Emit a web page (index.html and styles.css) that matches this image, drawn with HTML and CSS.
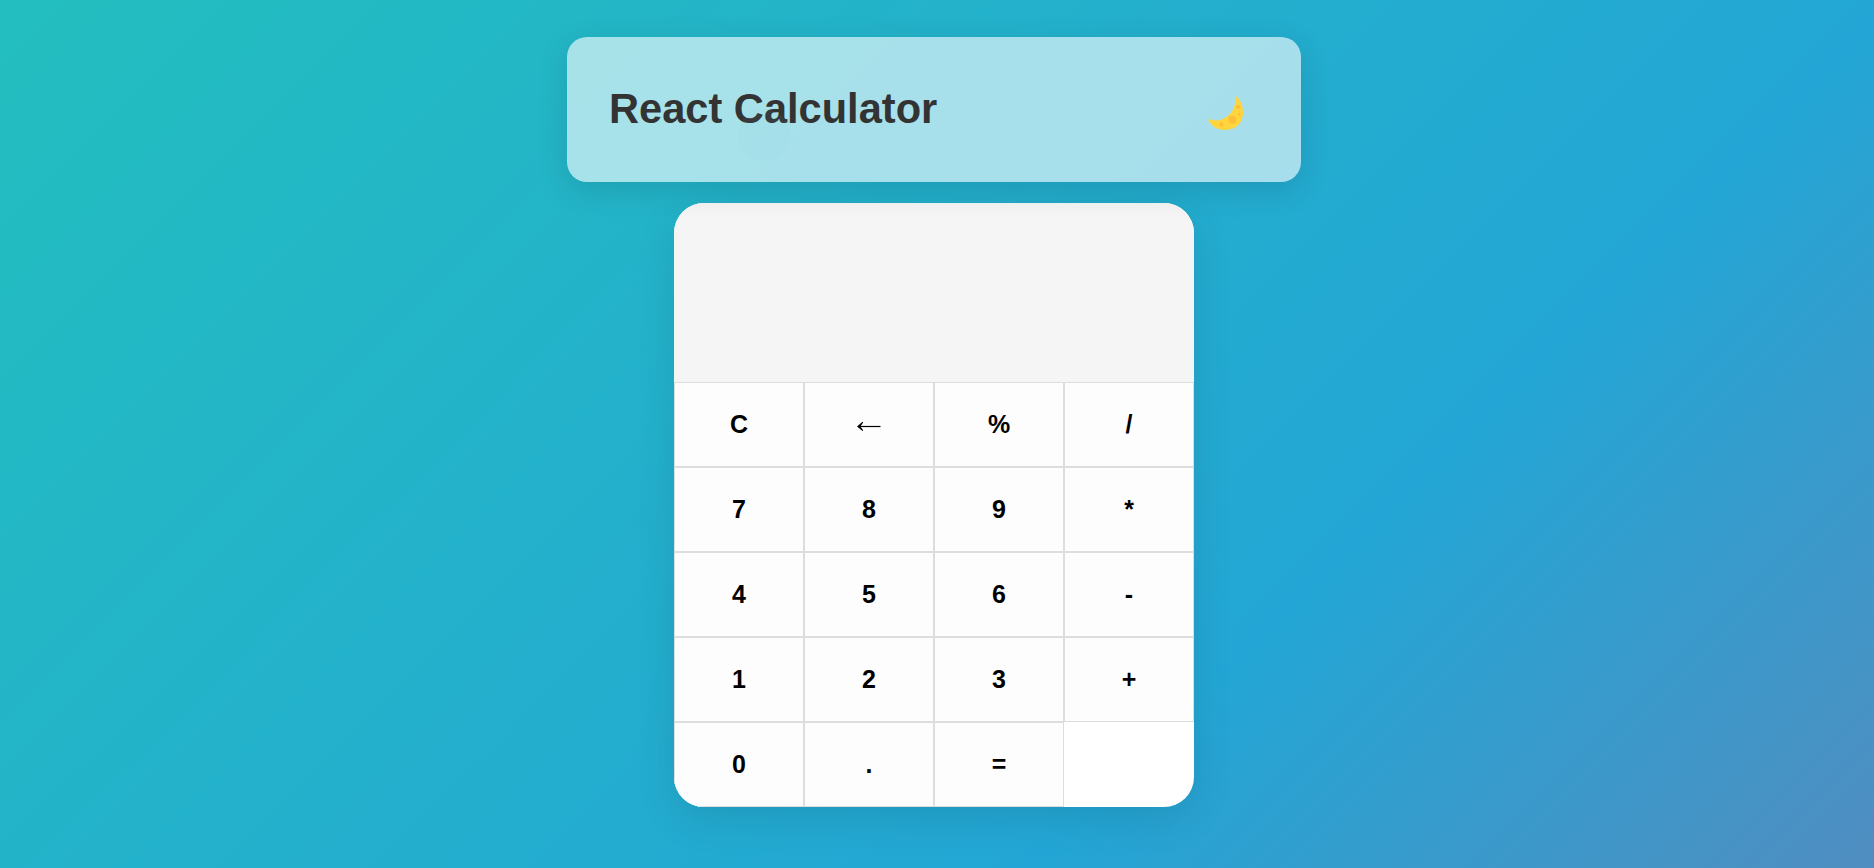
FILE: index.html
```
<!DOCTYPE html>
<html lang="en">
<head>
<meta charset="utf-8">
<title>React Calculator</title>
<link rel="stylesheet" href="styles.css">
</head>
<body>
<header class="header">
<h1 class="title">React Calculator</h1>
<button class="theme-toggle" aria-label="Toggle dark mode">
<svg class="moon" viewBox="14 12 105 102">
<path fill="#FFD53E" d="M96 15C97 36 93 54 76 70C60 84 40 89 20 82C16 81 14 84 17 88C28 106 45 114 65 114C97 114 119 93 119 64C119 43 114 29 101 15C99 12 96 12 96 15Z"/>
<circle cx="104" cy="45" r="6.500" fill="#FBBF38"/><circle cx="107.500" cy="67" r="4" fill="#FBBF38"/><circle cx="87" cy="83" r="12" fill="#FBBF38"/><circle cx="54" cy="97" r="6.500" fill="#FBBF38"/>
</svg>
</button>
</header>
<main class="calculator">
<div class="display"></div>
<div class="keys">
<button class="key">C</button><button class="key" aria-label="Backspace"><svg class="arrow" viewBox="0 0 24 10"><path fill="none" stroke="#000" stroke-width="1.200" d="M1.500 5.500H23.500"/><path d="M0 5.500L5.500 .8L6.200 1.500L3.300 5.500L6.200 9.200L5.500 10Z"/></svg></button><button class="key">%</button><button class="key">/</button>
<button class="key">7</button><button class="key">8</button><button class="key">9</button><button class="key">*</button>
<button class="key">4</button><button class="key">5</button><button class="key">6</button><button class="key">-</button>
<button class="key">1</button><button class="key">2</button><button class="key">3</button><button class="key">+</button>
<button class="key">0</button><button class="key">.</button><button class="key">=</button>
</div>
</main>
</body>
</html>
```
FILE: styles.css
```
* { box-sizing: border-box; }
body {
  margin: 0;
  height: 868px;
  padding: 37px 6px 0 0;
  display: flex;
  flex-direction: column;
  align-items: center;
  gap: 21px;
  overflow: hidden;
  font-family: "Liberation Sans", Arial, sans-serif;
  background: linear-gradient(-45deg, #ee7752, #e73c7e, #23a6d5, #23d5ab) -455px -1302px / 400% 400%;
}
.header {
  position: relative;
  width: 734px;
  height: 145px;
  flex: none;
  padding: 0 58px 0 42px;
  display: flex;
  align-items: center;
  justify-content: space-between;
  border-radius: 20px;
  background: rgba(255, 255, 255, 0.6);
  box-shadow: 0 8px 32px rgba(0, 0, 0, 0.12);
}
/* faint round highlight behind the title */
.header::after {
  content: "";
  position: absolute;
  left: 171px;
  top: 72px;
  width: 52px;
  height: 52px;
  border-radius: 50%;
  background: rgba(140, 215, 230, 0.05);
}
.title {
  margin: 0;
  padding-bottom: 2px;
  font-size: 41.6px;
  color: #333;
}
.theme-toggle {
  padding: 7px 0 0;
  border: 0;
  background: none;
}
.moon { display: block; width: 35px; height: 34px; }
.calculator {
  width: 520px;
  height: 604px;
  flex: none;
  border-radius: 30px;
  overflow: hidden;
  background: #fff;
  box-shadow: 0 12px 40px rgba(0, 0, 0, 0.1);
}
.display { height: 179px; background: #f5f5f5; }
.keys {
  display: grid;
  grid-template-columns: repeat(4, 130px);
  grid-auto-rows: 85px;
}
.key {
  padding: 0 0 1px;
  border: 1px solid #ddd;
  background: #fdfdfd;
  color: #000;
  font: bold 25px "Liberation Sans", Arial, sans-serif;
}
.arrow { display: block; width: 24px; height: 10px; margin: 3px auto 0; }
```
